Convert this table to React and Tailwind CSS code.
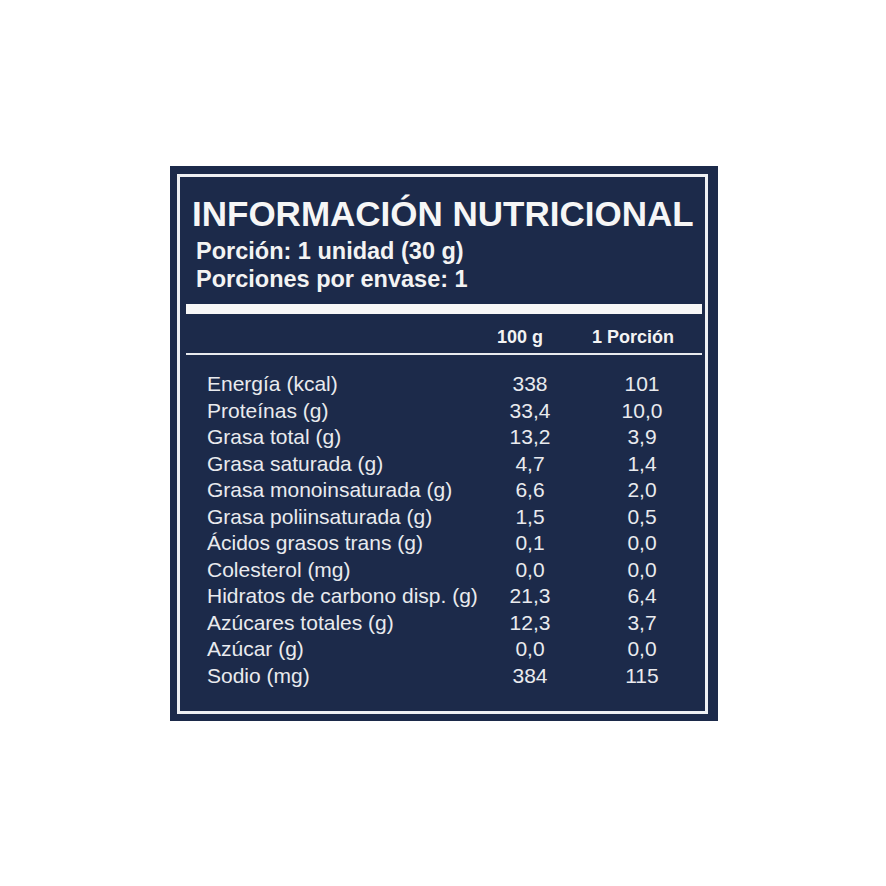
const ROWS = [
  ['Energía (kcal)', '338', '101'],
  ['Proteínas (g)', '33,4', '10,0'],
  ['Grasa total (g)', '13,2', '3,9'],
  ['Grasa saturada (g)', '4,7', '1,4'],
  ['Grasa monoinsaturada (g)', '6,6', '2,0'],
  ['Grasa poliinsaturada (g)', '1,5', '0,5'],
  ['Ácidos grasos trans (g)', '0,1', '0,0'],
  ['Colesterol (mg)', '0,0', '0,0'],
  ['Hidratos de carbono disp. (g)', '21,3', '6,4'],
  ['Azúcares totales (g)', '12,3', '3,7'],
  ['Azúcar (g)', '0,0', '0,0'],
  ['Sodio (mg)', '384', '115'],
]

export default function App() {
  return (
    <div
      className="min-h-screen bg-white pl-[170px] pt-[166px]"
      style={{ fontFamily: '"Liberation Sans", Arial, sans-serif' }}
    >
      <div className="w-[548px] h-[555px] bg-[#1c2a4a] pl-[7px] pr-[10px] pt-[8px] pb-[7px]">
        <div className="h-full border-[3px] border-[#eef0f3] pl-[6px] pr-[3px] pt-[20px]">
          {/* Title */}
          <h1 className="pl-[6px] text-[35px] leading-[34px] font-bold whitespace-nowrap text-[#f6f6f6]">
            INFORMACIÓN NUTRICIONAL
          </h1>
          <div className="mt-[6px] pl-[10px] text-[23.5px] leading-[28px] font-bold whitespace-nowrap text-[#f3f3f3]">
            <p>Porción: 1 unidad (30 g)</p>
            <p>Porciones por envase: 1</p>
          </div>

          <div className="mt-[11px] h-[10px] bg-[#f7f7f7]" />

          {/* Column headers */}
          <div className="mt-[14px] flex pl-[294px] text-[18px] leading-[18px] font-bold whitespace-nowrap text-[#f3f3f3]">
            <div className="w-[80px] text-center">100 g</div>
            <div className="ml-[32px] w-[80px] text-center">1 Porción</div>
          </div>

          <div className="mt-[7px] h-[2px] bg-[#e8eaee]" />

          {/* Rows */}
          <div className="mt-[16px] pl-[21px] text-[21px] text-[#e9eaee]">
            {ROWS.map(([label, per100, perPortion]) => (
              <div key={label} className="flex h-[26.5px] leading-[26.5px] whitespace-nowrap">
                <div className="w-[283px]">{label}</div>
                <div className="w-[80px] text-center">{per100}</div>
                <div className="ml-[32px] w-[80px] text-center">{perPortion}</div>
              </div>
            ))}
          </div>
        </div>
      </div>
    </div>
  )
}
